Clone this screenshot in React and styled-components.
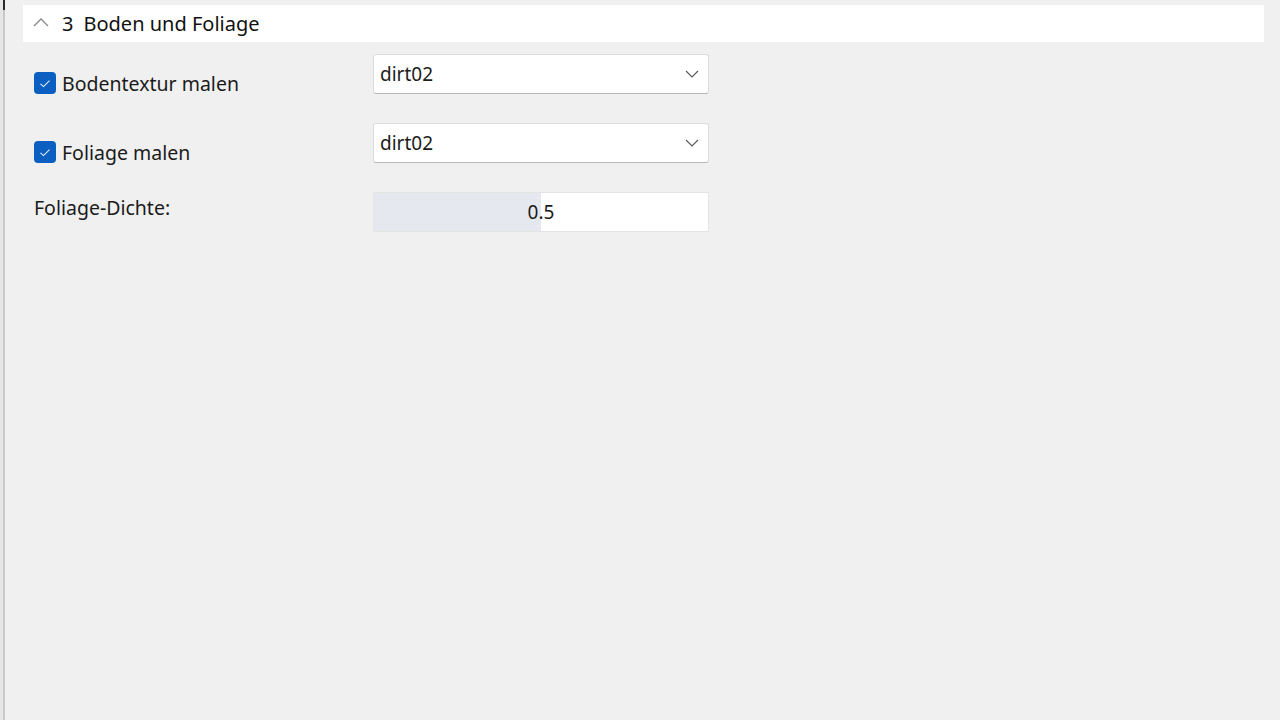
import React from "react";
import styled, { createGlobalStyle } from "styled-components";

const GlobalStyle = createGlobalStyle`
  html, body {
    margin: 0;
    padding: 0;
    background: #f0f0f0;
  }
  body {
    font-family: "Noto Sans", "Open Sans", sans-serif;
    color: #1b1b1b;
  }
`;

const Page = styled.div`
  width: 1280px;
  height: 720px;
  display: flex;
  background: #f0f0f0;
  overflow: hidden;
`;

const Edge = styled.div`
  width: 3px;
  flex-shrink: 0;
  background: #e6e6e6;
  border-right: 2px solid #c9c9c9;
  position: relative;

  &::before {
    content: "";
    position: absolute;
    top: 0;
    right: -2px;
    width: 2px;
    height: 10px;
    background: #2a2a2a;
  }
`;

const Panel = styled.div`
  flex: 1;
  padding: 5px 16px 0 18px;
  display: flex;
  flex-direction: column;
`;

const SectionHeader = styled.div`
  height: 37px;
  background: #ffffff;
  display: flex;
  align-items: center;
  padding-left: 10px;
  font-size: 20px;
  color: #111;
`;

const Chevron = styled.svg`
  width: 16px;
  height: 10px;
  margin-right: 13px;
  margin-top: -3px;
`;

const SectionNumber = styled.span`
  margin-right: 10px;
`;

const Form = styled.div`
  display: grid;
  grid-template-columns: 339px 336px;
  grid-auto-rows: 40px;
  row-gap: 29px;
  padding: 12px 0 0 11px;
`;

const CheckLabel = styled.label`
  display: flex;
  align-items: center;
  gap: 6px;
  margin-top: 18px;
  height: 22px;
  font-size: 19.5px;
`;

const CheckBox = styled.span`
  width: 22px;
  height: 22px;
  border-radius: 4px;
  background: #0b5fc1;
  display: flex;
  align-items: center;
  justify-content: center;
`;

const PlainLabel = styled.div`
  font-size: 19.5px;
  margin-top: 2px;
`;

const Select = styled.div`
  box-sizing: border-box;
  height: 40px;
  background: #fff;
  border: 1px solid #dcdcdc;
  border-bottom-color: #b8b8b8;
  border-radius: 3px;
  display: flex;
  align-items: center;
  justify-content: space-between;
  padding: 0 9px 0 6px;
  font-size: 19px;
`;

const SliderField = styled.div`
  box-sizing: border-box;
  height: 40px;
  position: relative;
  border: 1px solid #e4e4e4;
  background: #fff;
  display: flex;
  align-items: center;
  justify-content: center;
  font-size: 19px;
`;

const SliderFill = styled.div`
  position: absolute;
  left: 0;
  top: 0;
  bottom: 0;
  background: #e5e9ef;
`;

const SliderValue = styled.span`
  position: relative;
`;

const CheckMark = () => (
  <svg width="12" height="9" viewBox="0 0 12 9">
    <path d="M1.5 4.8 L4.5 7.6 L10.5 1.6" fill="none" stroke="#e6efff" strokeWidth="1.1" />
  </svg>
);

const DownArrow = () => (
  <svg width="14" height="8" viewBox="0 0 14 8">
    <path d="M1 1 L7 7 L13 1" fill="none" stroke="#555" strokeWidth="1.1" />
  </svg>
);

const App = () => {
  const density = 0.5;

  return (
    <>
      <GlobalStyle />
      <Page>
        <Edge />
        <Panel>
          <SectionHeader>
            <Chevron viewBox="0 0 16 10">
              <path d="M1 9 L8 2 L15 9" fill="none" stroke="#888" strokeWidth="1.3" />
            </Chevron>
            <SectionNumber>3</SectionNumber>
            Boden und Foliage
          </SectionHeader>
          <Form>
            <CheckLabel>
              <CheckBox>
                <CheckMark />
              </CheckBox>
              Bodentextur malen
            </CheckLabel>
            <Select>
              dirt02
              <DownArrow />
            </Select>

            <CheckLabel>
              <CheckBox>
                <CheckMark />
              </CheckBox>
              Foliage malen
            </CheckLabel>
            <Select>
              dirt02
              <DownArrow />
            </Select>

            <PlainLabel>Foliage-Dichte:</PlainLabel>
            <SliderField>
              <SliderFill style={{ width: `${density * 100}%` }} />
              <SliderValue>{density}</SliderValue>
            </SliderField>
          </Form>
        </Panel>
      </Page>
    </>
  );
};

export default App;
